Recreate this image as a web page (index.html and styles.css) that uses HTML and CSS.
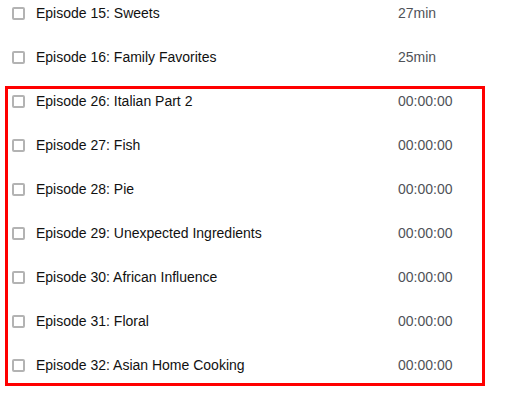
FILE: index.html
```html
<!DOCTYPE html>
<html>
<head>
<meta charset="utf-8">
<link rel="stylesheet" href="styles.css">
</head>
<body>
<div class="list">
  <div class="group">
    <div class="row"><span class="box"></span><span class="title">Episode 15: Sweets</span><span class="time">27min</span></div>
    <div class="row"><span class="box"></span><span class="title">Episode 16: Family Favorites</span><span class="time">25min</span></div>
  </div>
  <div class="group selected">
    <div class="row"><span class="box"></span><span class="title">Episode 26: Italian Part 2</span><span class="time">00:00:00</span></div>
    <div class="row"><span class="box"></span><span class="title">Episode 27: Fish</span><span class="time">00:00:00</span></div>
    <div class="row"><span class="box"></span><span class="title">Episode 28: Pie</span><span class="time">00:00:00</span></div>
    <div class="row"><span class="box"></span><span class="title">Episode 29: Unexpected Ingredients</span><span class="time">00:00:00</span></div>
    <div class="row"><span class="box"></span><span class="title">Episode 30: African Influence</span><span class="time">00:00:00</span></div>
    <div class="row"><span class="box"></span><span class="title">Episode 31: Floral</span><span class="time">00:00:00</span></div>
    <div class="row"><span class="box"></span><span class="title">Episode 32: Asian Home Cooking</span><span class="time">00:00:00</span></div>
  </div>
</div>
</body>
</html>
```
FILE: styles.css
```css
html, body {
  margin: 0;
  padding: 0;
  background: #fff;
}
body {
  font-family: "Liberation Sans", Arial, sans-serif;
  font-size: 14px;
  color: #111;
}
.list {
  width: 480px;
  margin-left: 5px;
  padding-top: 1px;
}
.group {
  display: flex;
  flex-direction: column;
  gap: 20px;
  padding: 0 3px;
}
.group.selected {
  margin-top: 17px;
  border: 3px solid #ff0000;
  padding: 0 0 6px 0;
}
.row {
  display: flex;
  align-items: center;
  height: 24px;
}
.box {
  flex: none;
  width: 9px;
  height: 9px;
  border: 2px solid #b3b3b3;
  border-radius: 2px;
  margin-left: 4px;
  margin-right: 11px;
  background: #fff;
}
.title {
  flex: 1;
}
.time {
  flex: none;
  width: 84px;
  color: #4f5258;
}
```
